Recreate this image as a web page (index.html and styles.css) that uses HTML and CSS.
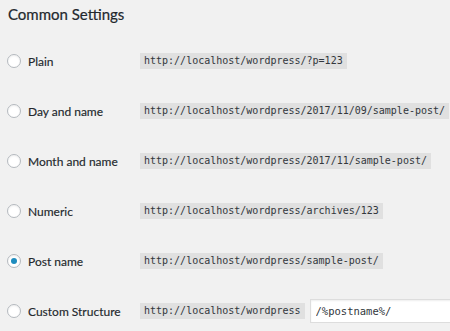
FILE: index.html
```html
<!DOCTYPE html>
<html lang="en">
<head>
    <meta charset="UTF-8">
    <meta name="viewport" content="width=device-width, initial-scale=1.0">
    <title>Permalink Settings</title>
    <link rel="stylesheet" href="styles.css">
</head>
<body>
    <div class="wrap">
        <h2 class="title">Common Settings</h2>

        <div class="options">
            <div class="option-row">
                <label class="option-label">
                    <span class="radio"></span>
                    <span>Plain</span>
                </label>
                <code>http://localhost/wordpress/?p=123</code>
            </div>

            <div class="option-row">
                <label class="option-label">
                    <span class="radio"></span>
                    <span>Day and name</span>
                </label>
                <code>http://localhost/wordpress/2017/11/09/sample-post/</code>
            </div>

            <div class="option-row">
                <label class="option-label">
                    <span class="radio"></span>
                    <span>Month and name</span>
                </label>
                <code>http://localhost/wordpress/2017/11/sample-post/</code>
            </div>

            <div class="option-row">
                <label class="option-label">
                    <span class="radio"></span>
                    <span>Numeric</span>
                </label>
                <code>http://localhost/wordpress/archives/123</code>
            </div>

            <div class="option-row">
                <label class="option-label">
                    <span class="radio checked"></span>
                    <span>Post name</span>
                </label>
                <code>http://localhost/wordpress/sample-post/</code>
            </div>

            <div class="option-row">
                <label class="option-label">
                    <span class="radio"></span>
                    <span>Custom Structure</span>
                </label>
                <code>http://localhost/wordpress</code>
                <input class="structure" type="text" value="/%postname%/">
            </div>
        </div>
    </div>
</body>
</html>
```

FILE: styles.css
```css
* {
    margin: 0;
    padding: 0;
    box-sizing: border-box;
}

body {
    font-family: 'Lato', 'Segoe UI', sans-serif;
    font-size: 12px;
    background-color: #f1f1f1;
    color: #23282d;
    overflow: hidden;
}

.wrap {
    padding: 4px 0 0 7px;
}

.title {
    font-size: 15px;
    font-weight: 400;
    line-height: 20px;
    height: 20px;
    margin-left: 1px;
    -webkit-text-stroke: 0.2px #23282d;
}

.options {
    margin-top: 12px;
}

.option-row {
    display: flex;
    align-items: center;
    height: 50px;
}

.option-label {
    display: flex;
    align-items: center;
    gap: 7px;
    width: 133px;
    flex-shrink: 0;
    -webkit-text-stroke: 0.15px #23282d;
}

.radio {
    width: 14px;
    height: 14px;
    border: 1px solid #b4b9be;
    border-radius: 50%;
    background-color: #fff;
    box-shadow: inset 0 1px 2px rgba(0,0,0,0.07);
    display: flex;
    align-items: center;
    justify-content: center;
}

.radio.checked::before {
    content: "";
    width: 6px;
    height: 6px;
    border-radius: 50%;
    background-color: #1e8cbe;
}

code {
    font-family: 'DejaVu Sans Mono', 'Liberation Mono', monospace;
    font-size: 10px;
    line-height: 16px;
    padding: 0 4px;
    background-color: rgba(0,0,0,0.07);
    color: #32373c;
    white-space: nowrap;
}

.structure {
    font-family: 'DejaVu Sans Mono', 'Liberation Mono', monospace;
    font-size: 10.5px;
    color: #32373c;
    height: 24px;
    width: 160px;
    margin-left: 5px;
    padding: 0 5px;
    border: 1px solid #ddd;
    background-color: #fff;
    box-shadow: inset 0 1px 2px rgba(0,0,0,0.07);
    flex-shrink: 0;
}
```
